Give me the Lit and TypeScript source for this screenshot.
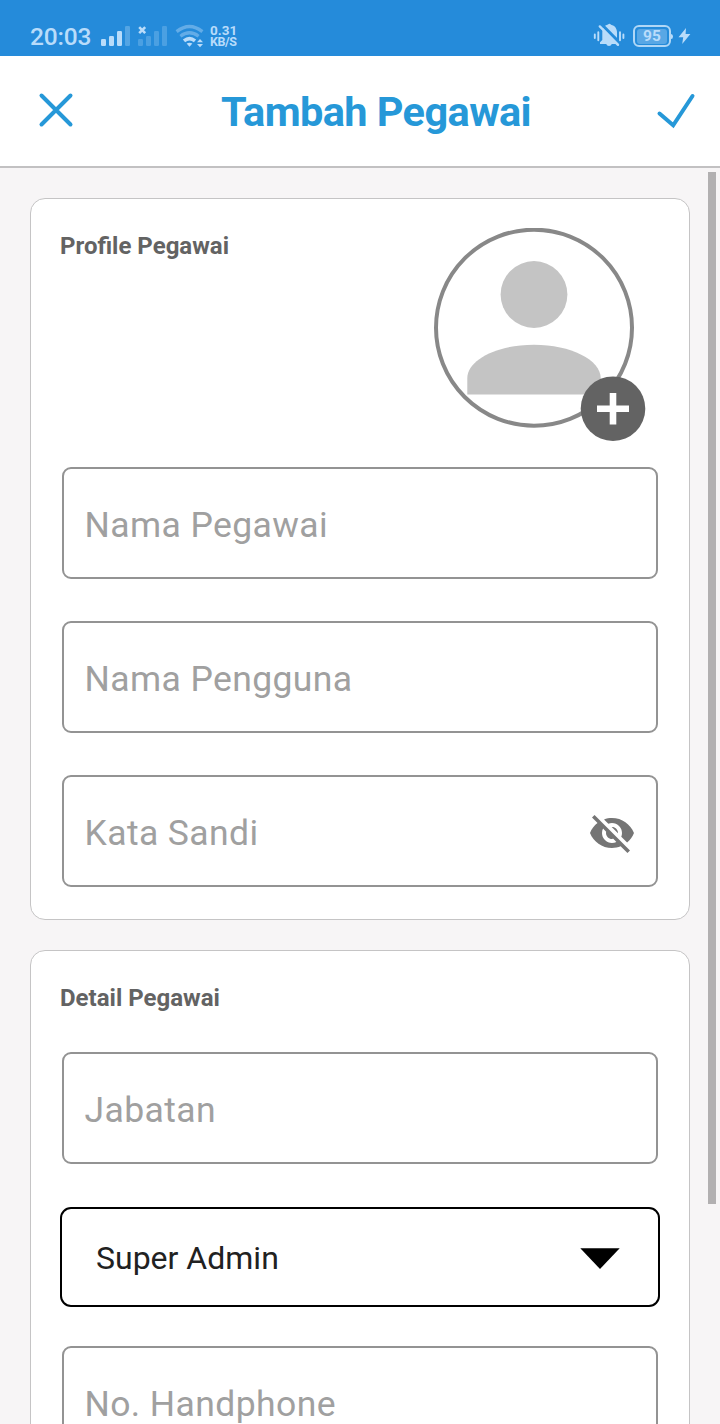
import { LitElement, html, css } from "lit";
import { customElement, property } from "lit/decorators.js";

@customElement("status-bar")
class StatusBar extends LitElement {
  static styles = css`
    :host {
      display: flex;
      flex: none;
      align-items: flex-start;
      box-sizing: border-box;
      height: 56px;
      padding: 22px 28px 0 30px;
      background: #258bda;
      color: #b9dcfa;
    }
    .clock {
      width: 71px;
      font-size: 24.5px;
      line-height: 29px;
      font-weight: 500;
      letter-spacing: -0.2px;
      white-space: nowrap;
    }
    .signals { display: block; width: 106px; height: 26px; }
    .rate {
      margin: 2px 0 0 3px;
      font-size: 13.5px;
      line-height: 12px;
      font-weight: 700;
      white-space: nowrap;
    }
    .rate div + div { font-size: 12.5px; line-height: 11px; letter-spacing: -0.4px; }
    .spacer { flex: 1; }
    .mute { display: block; width: 32px; height: 26px; margin-right: 8px; }
    .battery {
      display: flex;
      align-items: center;
      justify-content: center;
      box-sizing: border-box;
      width: 38px;
      height: 22px;
      margin-top: 3px;
      border: 2px solid #b0d7f6;
      border-radius: 6px;
    }
    .level {
      width: 30px;
      height: 15px;
      border-radius: 3px;
      background: #59a7e5;
      text-align: center;
      font-size: 15.5px;
      line-height: 15px;
      font-weight: 700;
    }
    .bolt { display: block; width: 21px; height: 26px; }
  `;
  render() {
    return html`
      <div class="clock">20:03</div>
      <svg class="signals" viewBox="101 22 106 26" fill="#b9dcfa">
        <rect x="101" y="39" width="5" height="7" rx="1.2" />
        <rect x="109" y="36" width="5" height="10" rx="1.2" />
        <rect x="117" y="31" width="5" height="15" rx="1.2" />
        <rect x="125" y="26" width="5" height="20" rx="1.2" opacity=".32" />
        <g opacity=".26">
          <rect x="138" y="39" width="5" height="7" rx="1.2" />
          <rect x="146" y="36" width="5" height="10" rx="1.2" />
          <rect x="154" y="31" width="5" height="15" rx="1.2" />
          <rect x="162" y="26" width="5" height="20" rx="1.2" />
        </g>
        <path d="M139.2 27.2l6 6M145.2 27.2l-6 6" stroke="#b9dcfa" stroke-width="2.6" />
        <g fill="none" stroke="#b9dcfa" stroke-width="3.3">
          <path d="M176.600 31.600Q189.500 21.400 202.400 31.600" opacity=".42" />
          <path d="M180.400 36.200Q189.500 29.400 198.600 36.200" opacity=".42" />
          <path d="M184 40.800Q189.500 36.400 195 40.800" stroke-width="3.600" />
        </g>
        <path d="M186.600 43.600Q189.500 41.800 192.400 43.600L189.500 46.800Z" />
        <path d="M197 42.300l3-3.400 3 3.400zM197 43.900h6l-3 3.400z" />
      </svg>
      <div class="rate"><div>0.31</div><div>KB/S</div></div>
      <div class="spacer"></div>
      <svg class="mute" viewBox="593 22 32 26" fill="#b9dcfa">
        <path d="M608 24.600a2 2 0 0 1 3 .1c4 .8 6 4 6 8v7l2 2.600v1.700h-7.200a3 3 0 0 1-5.600 0H600v-1.700l2.300-2.300v-7.500c0-4 2-7.100 5.700-7.900z" />
        <path d="M600.800 23.600L621.500 44.600" stroke="#258bda" stroke-width="3" />
        <path d="M599.800 26.400L618 44.800" stroke="#b9dcfa" stroke-width="2.400" stroke-linecap="round" />
        <path d="M594.800 34.500v3.500M598.300 32.200v8M620 32.200v8M623.400 34.500v3.500" stroke="#b9dcfa" stroke-width="1.900" stroke-linecap="round" />
      </svg>
      <div class="battery"><div class="level">95</div></div>
      <svg class="bolt" viewBox="671 22 21 26" fill="#b9dcfa">
        <path d="M671 34a2 2.500 0 0 1 0 5z" />
        <path d="M686 28l-7.500 9.200h4.700L682.200 44l8.200-10h-4.800z" />
      </svg>
    `;
  }
}

@customElement("text-field")
class TextField extends LitElement {
  @property() label = "";
  @property({ type: Boolean }) secret = false;
  static styles = css`
    :host {
      display: flex;
      align-items: center;
      justify-content: space-between;
      box-sizing: border-box;
      height: 112px;
      margin: 0 2px;
      padding: 3px 20px 0 20.5px;
      border: 2px solid #939393;
      border-radius: 9px;
      background: #fff;
      color: #a0a0a0;
      font-size: 35.5px;
      line-height: 42px;
      letter-spacing: 0.4px;
      white-space: nowrap;
    }
    .eye { display: block; width: 48px; height: 48px; }
  `;
  render() {
    return html`
      <span>${this.label}</span>
      ${this.secret
        ? html`<svg class="eye" viewBox="0 0 24 24" fill="#757575">
            <path d="M12 7c2.760 0 5 2.240 5 5 0 .65-.13 1.260-.36 1.830l2.920 2.920c1.510-1.260 2.700-2.890 3.430-4.750-1.730-4.390-6-7.500-11-7.500-1.400 0-2.740.25-3.980.7l2.160 2.160C10.740 7.130 11.350 7 12 7zM2 4.270l2.280 2.280.46.46C3.080 8.300 1.780 10.020 1 12c1.730 4.390 6 7.500 11 7.500 1.550 0 3.030-.3 4.380-.84l.42.42L19.730 22 21 20.730 3.270 3 2 4.270zM7.530 9.800l1.550 1.550c-.05.21-.08.43-.08.65 0 1.660 1.340 3 3 3 .22 0 .44-.03.65-.08l1.550 1.550c-.67.33-1.410.53-2.200.53-2.760 0-5-2.240-5-5 0-.79.2-1.530.53-2.200zm4.310-.78l3.150 3.150.02-.16c0-1.660-1.340-3-3-3l-.17.01z" />
          </svg>`
        : null}
    `;
  }
}

@customElement("app-root")
class AppRoot extends LitElement {
  static styles = css`
    :host {
      display: flex;
      flex-direction: column;
      position: relative;
      height: 1424px;
      overflow: hidden;
      background: #f7f5f6;
      font-family: Roboto, sans-serif;
    }
    .header {
      display: flex;
      align-items: center;
      justify-content: space-between;
      box-sizing: border-box;
      height: 112px;
      flex: none;
      padding: 0 24px 0 38px;
      background: #fff;
      border-bottom: 2px solid #c2c1c2;
    }
    .title {
      margin: 1px 0 0 22px;
      color: #2698d8;
      font-size: 41.5px;
      line-height: 50px;
      font-weight: 700;
      letter-spacing: -0.6px;
      white-space: nowrap;
    }
    .icon { display: block; height: 40px; margin-bottom: 2px; }
    .close { width: 36px; }
    .check { width: 40px; }
    .content {
      display: flex;
      flex: none;
      flex-direction: column;
      gap: 30px;
      padding: 30px;
    }
    .card {
      box-sizing: border-box;
      border: 1px solid #c5c4c5;
      border-radius: 15px;
      background: #fff;
      padding: 29px 29px 32px;
    }
    .top {
      display: flex;
      justify-content: space-between;
      height: 239px;
    }
    .heading {
      margin: 3px 0 0;
      color: #636363;
      font-size: 24px;
      line-height: 30px;
      font-weight: 700;
      white-space: nowrap;
    }
    .avatar { display: block; width: 212px; height: 216px; margin-right: 14px; }
    .fields { display: flex; flex-direction: column; gap: 42px; }
    .detail-heading { margin-bottom: 39px; }
    .select {
      display: flex;
      align-items: center;
      justify-content: space-between;
      box-sizing: border-box;
      height: 100px;
      margin: 43px 0 39px;
      padding: 2px 38px 0 34px;
      border: 2px solid #000;
      border-radius: 11px;
      color: #212121;
      font-size: 32px;
      line-height: 38px;
      white-space: nowrap;
    }
    .caret { display: block; width: 40px; height: 21px; margin-top: 1px; }
    .scrollbar {
      position: absolute;
      top: 172px;
      right: 4px;
      width: 8px;
      height: 1032px;
      background: #b2b0b1;
    }
  `;
  render() {
    return html`
      <status-bar></status-bar>
      <header class="header">
        <svg class="icon close" viewBox="38 90 36 40" fill="none" stroke="#2698d8" stroke-width="4" stroke-linecap="round">
          <path d="M41.500 95.500L70.500 124.500M70.500 95.500L41.500 124.500" />
        </svg>
        <h1 class="title">Tambah Pegawai</h1>
        <svg class="icon check" viewBox="656 90 40 40" fill="none" stroke="#2698d8" stroke-width="4" stroke-linecap="round" stroke-linejoin="miter">
          <path d="M659.500 113.500L673.200 125.300L692.500 96" />
        </svg>
      </header>
      <main class="content">
        <section class="card">
          <div class="top">
            <h2 class="heading">Profile Pegawai</h2>
            <svg class="avatar" viewBox="434 228 212 216">
              <circle cx="534" cy="327.700" r="98" fill="#fff" stroke="#888" stroke-width="4" />
              <circle cx="534" cy="294.500" r="33.400" fill="#c4c4c4" />
              <path d="M467.300 394.500V378C467.300 360 497 344.700 534 344.700S600.700 360 600.700 378V394.500Z" fill="#c4c4c4" />
              <circle cx="613" cy="408.700" r="32.300" fill="#636363" />
              <path d="M613 393v31.500M597 408.700h32" stroke="#fff" stroke-width="6.600" />
            </svg>
          </div>
          <div class="fields">
            <text-field label="Nama Pegawai"></text-field>
            <text-field label="Nama Pengguna"></text-field>
            <text-field label="Kata Sandi" secret></text-field>
          </div>
        </section>
        <section class="card">
          <h2 class="heading detail-heading">Detail Pegawai</h2>
          <text-field label="Jabatan"></text-field>
          <div class="select">
            <span>Super Admin</span>
            <svg class="caret" viewBox="0 0 40 21"><path d="M0.300 0.300H39.700L20 21Z" /></svg>
          </div>
          <text-field label="No. Handphone"></text-field>
        </section>
      </main>
      <div class="scrollbar"></div>
    `;
  }
}
